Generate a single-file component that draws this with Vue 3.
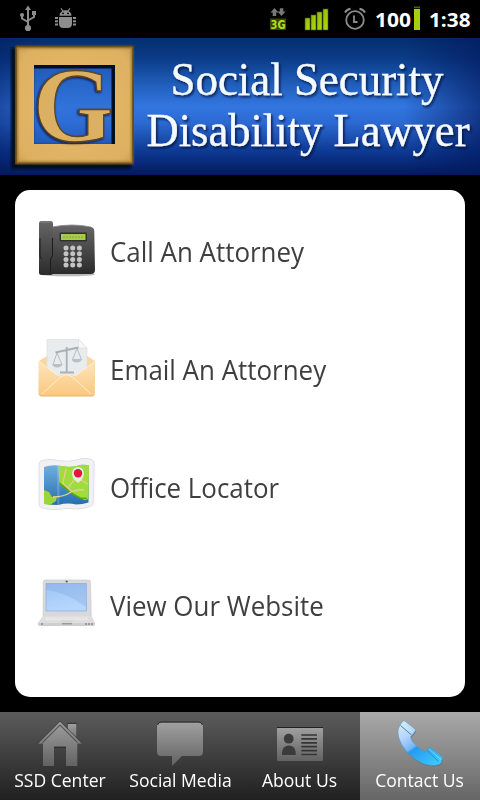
<template>
  <div class="screen">
    <!-- status bar -->
    <div class="status-bar">
      <svg class="status-usb" width="18" height="27" viewBox="19 5 18 27">
        <g fill="none" stroke="#8d8d8d" stroke-width="2">
          <path d="M28 9v17M22 15v3.5l6 3.5M34 13v4l-6 3.5" />
        </g>
        <g fill="#8d8d8d">
          <path d="M28 5.5l3 4.5h-6z" />
          <circle cx="28" cy="28" r="3.1" />
          <circle cx="22" cy="15" r="2.1" />
          <path d="M32 11h4v4h-4z" />
        </g>
      </svg>
      <svg class="status-bug" width="22" height="21" viewBox="54 8 22 21">
        <g fill="#8d8d8d">
          <path d="M59.500 15.700c0-7.400 12-7.400 12 0z" />
          <path d="M59 17h13v6.500q0 4.500-4.500 4.500h-4q-4.500 0-4.500-4.500z" />
          <path d="M55 17h3v2h-3zM55 20.300h3v2h-3zM55 23.500h3v2h-3zM73 17h3v2h-3zM73 20.300h3v2h-3zM73 23.500h3v2h-3z" />
        </g>
        <path d="M61 8.200l2.200 3.200M70 8.200l-2.200 3.200" stroke="#8d8d8d" stroke-width="1.100" />
        <circle cx="63" cy="13.300" r="0.900" />
        <circle cx="68" cy="13.300" r="0.900" />
      </svg>

      <div class="status-right">
        <svg class="status-3g" width="22" height="28" viewBox="267 7 22 28">
          <path fill="#777" d="M274.500 8l4 4.500h-2.300v3.500h-3.500v-3.500h-2.300zM281.500 16l-4-4.500h2.300v-3.300h3.500v3.300h2.300z" />
          <rect x="270" y="18.500" width="16" height="11.500" fill="#4e6500" opacity="0.7" />
          <text x="270.500" y="28.600" textLength="15" lengthAdjust="spacingAndGlyphs" class="net-text">3G</text>
        </svg>
        <svg class="status-signal" width="27" height="24" viewBox="303 8 27 24">
          <defs>
            <linearGradient id="bars" x1="0" y1="0" x2="1" y2="1">
              <stop offset="0" stop-color="#91b40a" />
              <stop offset="1" stop-color="#b5e00c" />
            </linearGradient>
          </defs>
          <g fill="url(#bars)" stroke="#3f5200" stroke-width="0.6">
            <rect x="305" y="18" width="5" height="12" />
            <rect x="311" y="15" width="5" height="15" />
            <rect x="317" y="12" width="5" height="18" />
            <rect x="323" y="9" width="5" height="21" />
          </g>
        </svg>
        <svg class="status-alarm" width="22" height="24" viewBox="344 7 22 24">
          <g fill="none" stroke="#8c8c8c">
            <circle cx="355" cy="20" r="8.800" stroke-width="1.800" />
            <path d="M345 12.500q1.500-3 5.500-3.800M365 12.500q-1.500-3-5.500-3.800" stroke-width="2" />
            <path d="M354 15.500v6.500h3.500" stroke-width="1.800" />
          </g>
        </svg>
        <svg class="status-battery" width="48" height="27" viewBox="374 5 48 27">
          <text x="375" y="26.800" textLength="36" lengthAdjust="spacingAndGlyphs" class="status-text">100</text>
          <rect x="414" y="9" width="6" height="21" fill="#a5cf10" />
          <rect x="414" y="6.500" width="6" height="1.700" fill="#4c6205" />
        </svg>
        <svg width="42" height="27" viewBox="429 5 42 27">
          <text x="429" y="26.800" textLength="41.500" lengthAdjust="spacingAndGlyphs" class="status-text">1:38</text>
        </svg>
      </div>
    </div>

    <!-- banner -->
    <svg class="banner" width="480" height="138" viewBox="0 0 480 138">
      <defs>
        <linearGradient id="sky" x1="0" y1="0" x2="0" y2="1">
          <stop offset="0" stop-color="#042f6e" />
          <stop offset="0.15" stop-color="#0b3c88" />
          <stop offset="0.35" stop-color="#2260bd" />
          <stop offset="0.5" stop-color="#3276e0" />
          <stop offset="0.62" stop-color="#2c69d2" />
          <stop offset="0.82" stop-color="#0e3b95" />
          <stop offset="1" stop-color="#02195e" />
        </linearGradient>
        <linearGradient id="sides" x1="0" y1="0" x2="1" y2="0">
          <stop offset="0" stop-color="#02195e" stop-opacity="0.45" />
          <stop offset="0.1" stop-color="#02195e" stop-opacity="0" />
          <stop offset="0.84" stop-color="#02195e" stop-opacity="0" />
          <stop offset="1" stop-color="#02195e" stop-opacity="0.65" />
        </linearGradient>
        <radialGradient id="gold" cx="0.5" cy="0.5" r="0.75">
          <stop offset="0" stop-color="#e6bd6c" />
          <stop offset="0.8" stop-color="#deb061" />
          <stop offset="1" stop-color="#c89a4c" />
        </radialGradient>
        <filter id="soft" x="-10%" y="-10%" width="120%" height="120%">
          <feGaussianBlur stdDeviation="1.3" />
        </filter>
        <filter id="textShadow" x="-5%" y="-20%" width="110%" height="140%">
          <feDropShadow dx="1.5" dy="2" stdDeviation="1" flood-color="#001035" flood-opacity="0.8" />
        </filter>
        <filter id="letterShadow" x="-10%" y="-10%" width="125%" height="125%">
          <feDropShadow dx="-1" dy="1" stdDeviation="1.2" flood-color="#001035" flood-opacity="0.9" />
        </filter>
        <clipPath id="frameHole">
          <path d="M34 27h81v80H34z" />
        </clipPath>
      </defs>
      <rect width="480" height="137" fill="url(#sky)" />
      <rect width="480" height="137" fill="url(#sides)" />

      <path d="M11 10h120v121H11zM34 27v79h81V27z" fill="#000a20" fill-rule="evenodd" filter="url(#soft)" />
      <rect x="34" y="27" width="81" height="79" fill="#2f70d8" opacity="0.5" />
      <g clip-path="url(#frameHole)">
        <path d="M34 27h81v79" fill="none" stroke="#020c22" stroke-width="7" />
      </g>
      <path d="M15 7.500h119v119H15zM34 27v79h81V27z" fill="#4a3412" fill-rule="evenodd" />
      <path d="M17 9.500h115v115H17zM34 27v79h81V27z" fill="url(#gold)" fill-rule="evenodd" />
      <path d="M17 9.500h115v115H17z" fill="none" stroke="#94702f" stroke-width="2" filter="url(#soft)" />
      <text x="33" y="103" textLength="80" lengthAdjust="spacingAndGlyphs" class="logo-letter" filter="url(#letterShadow)">G</text>

      <g class="banner-text" filter="url(#textShadow)">
        <text x="170.500" y="57" textLength="273" lengthAdjust="spacingAndGlyphs">Social Security</text>
        <text x="146.500" y="107.500" textLength="323" lengthAdjust="spacingAndGlyphs">Disability Lawyer</text>
      </g>
    </svg>

    <!-- contact options -->
    <div class="card">
      <div v-for="item in items" :key="item.id" class="menu-row">
        <svg class="menu-icon" width="58" height="60" viewBox="0 0 58 60">
          <g v-if="item.id === 'call'">
            <defs>
              <linearGradient id="deskPhone" x1="0" y1="0" x2="0" y2="1">
                <stop offset="0" stop-color="#666" />
                <stop offset="1" stop-color="#2b2b2b" />
              </linearGradient>
            </defs>
            <ellipse cx="30" cy="55.500" rx="27" ry="1.800" fill="#bbb" />
            <path d="M14 8q20-4 39 0q3 .5 3.300 4l.7 39q0 4-4 4H14z" fill="url(#deskPhone)" />
            <path d="M14 8q20-4 39 0" fill="none" stroke="#8a8a8a" stroke-width="0.8" />
            <rect x="1" y="2" width="14" height="54" rx="2.500" fill="url(#deskPhone)" />
            <path d="M2.500 3h11" stroke="#888" />
            <path d="M2 19v19l2 2M14.500 19v18l-2 3v15" fill="none" stroke="#1c1c1c" />
            <rect x="21.500" y="13.500" width="27.500" height="9" rx="1" fill="#303030" />
            <rect x="23" y="15" width="24.500" height="6" fill="#a6cc4c" />
            <path d="M25 18.300h21" stroke="#8fb53c" stroke-width="1.500" stroke-dasharray="2 1" />
            <g fill="#c4c4c4">
              <template v-for="y in [29, 34.7, 40.4, 46.1]" :key="y">
                <circle v-for="x in [28, 34.7, 41.4]" :key="x" :cx="x" :cy="y" r="2.5" />
              </template>
            </g>
          </g>

          <g v-else-if="item.id === 'email'">
            <defs>
              <linearGradient id="envelope" x1="0" y1="0" x2="0" y2="1">
                <stop offset="0" stop-color="#fde5bb" />
                <stop offset="1" stop-color="#fbc77e" />
              </linearGradient>
            </defs>
            <path d="M1 24l8-5h40l8 5v32H1z" fill="#f8d7a2" />
            <path d="M9 2.500h32l8 9V44H9z" fill="#e9ecec" stroke="#dcdfdf" stroke-width="0.7" />
            <path d="M40.500 2.500v8.500h8.500z" fill="#f8f8f8" stroke="#d9dcdc" stroke-width="0.6" />
            <g fill="none" stroke="#a9b0b9" stroke-width="1.300">
              <path d="M28.700 10v25M17.500 15.500l23-5" stroke-width="1.800" />
              <path d="M22 35.500h14" stroke-width="2" />
              <path d="M19 16l-4 11.500h9zM39 11.500l-4.500 11h9z" stroke-width="0.8" />
            </g>
            <path d="M14.300 27.500h10q-1 3-5 3t-5-3zM33.700 22.500h10q-1 3-5 3t-5-3z" fill="#b9bfc6" />
            <path d="M.5 24.500L20 39q8-3 17 0l19.500-14.500V56q0 3-3 3h-50q-3 0-3-3z" fill="url(#envelope)" />
            <path d="M1 24.500L20.500 39M56.500 24.500L37 39M4 57l18-16.500q6.500-5 13 0L53 57" fill="none" stroke="#fff0d2" stroke-width="0.900" />
            <path d="M1 57.500q.5 1.500 3 1.500h50q2 0 2.500-1.500" fill="none" stroke="#e3b472" />
          </g>

          <g v-else-if="item.id === 'office'">
            <defs>
              <linearGradient id="water" x1="0" y1="0" x2="0" y2="1">
                <stop offset="0" stop-color="#71afe0" />
                <stop offset="1" stop-color="#256eae" />
              </linearGradient>
            </defs>
            <path d="M1 9q0-2.500 3-3.500Q12 3 20 5.500q10 2 18-.5 9-3 15-.5 3.500 1 3.300 4l-1 39q0 3-3 4-7 2.500-15 2.500-8-1.500-17 .5-8 1-16-1.500-3.500-1-3.300-4z" fill="#f1f1f4" stroke="#dcdce2" stroke-width="0.9" />
            <path d="M6 12q7-2.500 14.500-1.500 9 2.500 18 .5 6-2 12.500-.5l-.5 37q-6 2-12.500 2-8-2-18 .5-7 0-14-1.500z" fill="url(#water)" />
            <path d="M20.500 10.500q10 2 18 .5 6-2 12.500-.5l-.5 33q-3 3-7 0l-9-5-13-9z" fill="#9fdc3c" />
            <path d="M21 28l14 11 7 4 7 .5" fill="none" stroke="#5ca51b" stroke-width="1.600" />
            <path d="M6 35l5 2 3 5 5-1-1 5-6 4-6-1z" fill="#9cd438" />
            <path d="M15 42q11 0 18-5 7-3 13-2M28 14l-3 14 9 9M30 33l8-11 12 7" fill="none" stroke="#e3cf93" stroke-width="1.300" />
            <path d="M20.300 6v48" stroke="#fff" stroke-opacity="0.2" stroke-width="2" />
            <path d="M40 28l-4-3.500q-2.500-3-2-6.500 1-6 6-6t6 6q0 3.500-2 6.500z" fill="#eef1f5" fill-opacity="0.85" />
            <circle cx="40" cy="18.300" r="4.200" fill="#e4173b" />
          </g>

          <g v-else>
            <defs>
              <linearGradient id="display" x1="0" y1="0" x2="0.3" y2="1">
                <stop offset="0" stop-color="#9fc3f2" />
                <stop offset="1" stop-color="#b6d7fd" />
              </linearGradient>
            </defs>
            <path d="M7 7h43.500q2 0 2 2l.8 35H5L5.300 9q0-2 1.700-2z" fill="#d9d9dc" stroke="#c8c8cc" stroke-width="0.6" />
            <rect x="8" y="10.500" width="40.500" height="27.500" fill="url(#display)" stroke="#94b2e0" stroke-width="0.800" />
            <path d="M8 17q20 2 40 17V10.500H8z" fill="#719bdc" opacity="0.25" />
            <circle cx="28.700" cy="8.500" r="1.100" fill="#555" />
            <path d="M5 43h48.500l3.500 6.500H0z" fill="#dedede" />
            <path d="M9 44h39l2 2.500H7z" fill="#f3f3f3" />
            <path d="M9 45h39M23 48h12" stroke="#cbcbce" stroke-width="0.8" />
            <path d="M0 49.500h57v2q0 1.500-2 1.500H2q-2 0-2-1.500z" fill="#cfcfd2" />
            <path d="M24 50.700h10" stroke="#9a9a9a" stroke-width="1.500" />
            <path d="M3 51h3M47 51h8" stroke="#96877f" stroke-width="1.400" stroke-dasharray="2 1" />
          </g>
        </svg>
        <span class="menu-label">{{ item.label }}</span>
      </div>
    </div>

    <!-- tabs -->
    <div class="tab-bar">
      <svg class="tab-defs" width="0" height="0">
        <defs>
          <linearGradient id="grey" x1="0" y1="0" x2="0" y2="1">
            <stop offset="0" stop-color="#a0a0a0" />
            <stop offset="1" stop-color="#626262" />
          </linearGradient>
          <linearGradient id="blue" x1="0.1" y1="0" x2="0.8" y2="1">
            <stop offset="0" stop-color="#d5ebf4" />
            <stop offset="0.28" stop-color="#b5d3fc" />
            <stop offset="0.5" stop-color="#75b5f8" />
            <stop offset="0.55" stop-color="#279af0" />
            <stop offset="1" stop-color="#3cc7fd" />
          </linearGradient>
        </defs>
      </svg>
      <div
        v-for="tab in tabs"
        :key="tab.id"
        class="tab"
        :class="{ active: activeTab === tab.id }"
        @click="activeTab = tab.id"
      >
        <svg class="tab-icon" width="48" height="48" viewBox="0 0 48 48">
          <g v-if="tab.id === 'center'">
            <path d="M32 4.700h8.200V24L32 15.500z" fill="url(#grey)" />
            <path d="M31.500 4.300h9" stroke="#303030" />
            <path d="M24 2.500L46 24.500h-4.700V47H30V28H18v19H7V24.500H2z" fill="url(#grey)" />
            <path d="M2 24.200L24 2.200l22 22" fill="none" stroke="#343434" stroke-width="0.7" />
            <path d="M6.500 23.500L24 6l17.500 17.500" fill="none" stroke="#555" stroke-width="1.100" />
            <path d="M18 28.300h12" stroke="#333" stroke-width="1.500" />
          </g>
          <g v-else-if="tab.id === 'social'">
            <path d="M5.500 3.500h37q4.500 0 4.500 4.500v24.500q0 4.500-4.500 4.500H26L16 47V37H5.500Q1 37 1 32.500V8q0-4.500 4.500-4.500z" fill="url(#grey)" />
            <path d="M1.500 6q1-3 4-3h37q3 0 4 3" fill="none" stroke="#282828" />
          </g>
          <g v-else-if="tab.id === 'about'">
            <rect x="1" y="8.500" width="46" height="33.500" rx="1" fill="url(#grey)" />
            <path d="M1 8.500h46" stroke="#222" />
            <circle cx="12.700" cy="19.700" r="4.900" fill="#3b3b3b" />
            <path d="M6 36v-3q1-6.500 6.800-6.500T19.700 33v3z" fill="#3b3b3b" />
            <path d="M25.300 16H41M25.300 19.900H41M25.300 23.800H41M25.300 27.700H41M25.300 31.600H41M25.300 35.500H41" stroke="#353535" stroke-width="1.700" />
          </g>
          <g v-else>
            <path d="M2 12q0-2 1.500-5l3-4.500Q8 1 9.500 2.500L19 10q1 1 0 2.500L15.500 17l-1 1q1.500 7 14.500 15l4-4q1-1 2.500 0l10.500 9q1 1 .3 2.500-1 4-3 5-9 2.500-17.500-1.500Q7 34 2.700 18.500 1.800 15 2 12z" fill="#3b5966" opacity="0.45" transform="translate(0.500 1)" />
            <path d="M2 12q0-2 1.500-5l3-4.500Q8 1 9.500 2.500L19 10q1 1 0 2.500L15.500 17l-1 1q1.500 7 14.500 15l4-4q1-1 2.500 0l10.500 9q1 1 .3 2.500-1 4-3 5-9 2.500-17.500-1.500Q7 34 2.700 18.500 1.800 15 2 12z" fill="url(#blue)" stroke="#5798c2" stroke-width="0.600" />
            <path d="M4.500 6.500l11 9.500M31 31.500l11.500 11" fill="none" stroke="#438dae" stroke-width="1" />
            <path d="M6 5l11 8.500M33 30l12 10.500" fill="none" stroke="#e5fbff" stroke-opacity="0.5" stroke-width="0.800" />
          </g>
        </svg>
        <span class="tab-label">{{ tab.label }}</span>
      </div>
    </div>
  </div>
</template>

<script setup>
import { ref } from "vue";

const items = [
  { id: "call", label: "Call An Attorney" },
  { id: "email", label: "Email An Attorney" },
  { id: "office", label: "Office Locator" },
  { id: "website", label: "View Our Website" },
];

const tabs = [
  { id: "center", label: "SSD Center" },
  { id: "social", label: "Social Media" },
  { id: "about", label: "About Us" },
  { id: "contact", label: "Contact Us" },
];

const activeTab = ref("contact");
</script>

<style>
body {
  margin: 0;
  background: #000;
}
</style>

<style scoped>
.screen {
  display: flex;
  flex-direction: column;
  width: 480px;
  height: 800px;
  overflow: hidden;
  background: #000;
  font-family: "Open Sans", "Noto Sans", sans-serif;
}

svg {
  display: block;
  flex: none;
  overflow: visible;
}

/* status bar */
.status-bar {
  display: flex;
  align-items: flex-start;
  height: 38px;
  padding: 5px 9px 0 19px;
  box-sizing: border-box;
}

.status-bug {
  margin: 3px 0 0 17px;
}

.status-right {
  display: flex;
  margin-left: auto;
}

.status-3g {
  margin: 2px 14px 0 0;
}

.status-signal {
  margin: 3px 14px 0 0;
}

.status-alarm {
  margin: 2px 8px 0 0;
}

.status-battery {
  margin-right: 7px;
}

.status-text {
  font-size: 20px;
  font-weight: 700;
  fill: #fff;
}

.net-text {
  font-family: "DejaVu Sans", sans-serif;
  font-size: 12px;
  font-weight: 700;
  fill: #b4dc18;
}

/* banner */
.banner-text {
  font-family: "Liberation Serif", serif;
  font-size: 46px;
  fill: #f5faff;
  stroke: #f5faff;
  stroke-width: 0.3px;
}

.logo-letter {
  font-family: "Liberation Serif", serif;
  font-size: 106px;
  font-weight: 700;
  fill: #dcb063;
  stroke: #5d441c;
  stroke-width: 1.3px;
}

/* contact options */
.card {
  height: 507px;
  margin: 14px 15px 15px;
  background: #fff;
  border-radius: 15px;
}

.menu-row {
  display: flex;
  align-items: flex-start;
  height: 118px;
  padding: 29px 0 0 23px;
  box-sizing: border-box;
}

.menu-label {
  margin: 13px 0 0 14px;
  font-size: 27px;
  line-height: 40px;
  color: #3f3f3f;
  white-space: nowrap;
  transform: scaleX(0.96);
  transform-origin: left;
}

/* tabs */
.tab-bar {
  display: flex;
  height: 88px;
  background: linear-gradient(#5c5c5c, #202020);
}

.tab-defs {
  position: absolute;
}

.tab {
  display: flex;
  flex-direction: column;
  align-items: center;
  width: 120px;
  height: 88px;
  padding-top: 7px;
  box-sizing: border-box;
  cursor: pointer;
}

.tab.active {
  background: linear-gradient(#a9a9a9, #666);
}

.tab-label {
  font-size: 18px;
  line-height: 26px;
  color: #fff;
  white-space: nowrap;
  transform: scaleX(0.975);
}
</style>
